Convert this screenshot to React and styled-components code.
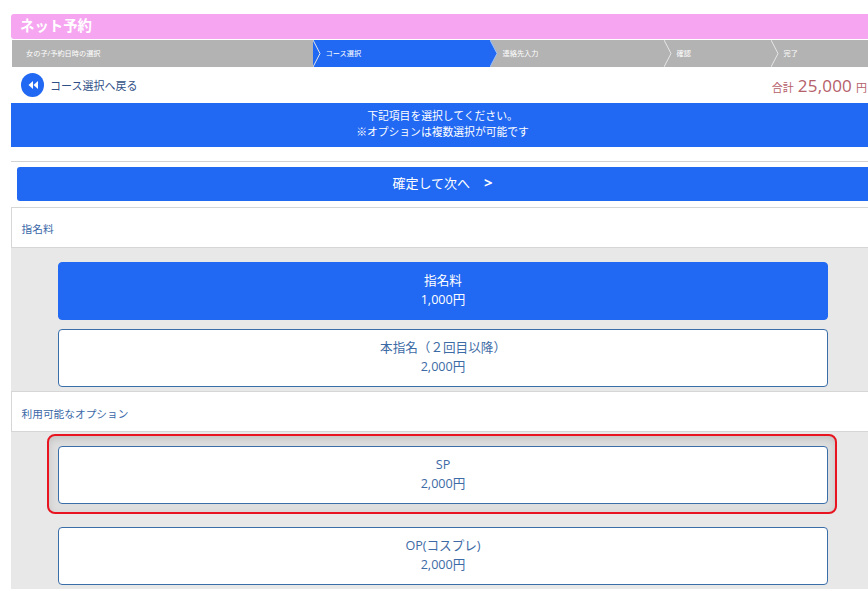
import React from "react";
import styled, { createGlobalStyle } from "styled-components";

const GlobalStyle = createGlobalStyle`
  html, body {
    margin: 0;
    padding: 0;
    background: #fff;
    overflow: hidden;
  }
  body {
    font-family: "Open Sans", "Noto Sans CJK JP", sans-serif;
  }
`;

const Page = styled.div`
  width: 868px;
  height: 591px;
  padding: 14px 0 0 11px;
  box-sizing: border-box;
  overflow: hidden;
`;

const Title = styled.h1`
  margin: 0;
  height: 25px;
  padding-left: 9px;
  background: #f6a6f1;
  border-radius: 3px 0 0 3px;
  color: #fff;
  font-size: 14.4px;
  font-weight: 700;
  line-height: 23px;
`;

const Steps = styled.div`
  display: grid;
  grid-template-columns: 301px 177px 174px 107px 1fr;
  height: 27px;
  margin: 1px 0 0 1px;
  background: #b3b3b3;
`;

const Step = styled.div`
  position: relative;
  padding-left: ${(p) => (p.$first ? "14px" : "12.5px")};
  background: ${(p) => (p.$active ? "#2168f2" : "transparent")};
  color: #fff;
  font-size: 7.2px;
  line-height: 27px;
  white-space: nowrap;
`;

const Chevron = styled.svg`
  position: absolute;
  top: 0;
  right: -8px;
  width: 8px;
  height: 27px;
  z-index: 1;
`;

const BackRow = styled.div`
  display: flex;
  align-items: center;
  justify-content: space-between;
  height: 36px;
  padding: 0 1px 0 10px;
`;

const BackLink = styled.a`
  display: flex;
  align-items: center;
  gap: 6px;
  color: #2f4f86;
  font-size: 11px;
`;

const BackIcon = styled.span`
  display: flex;
  align-items: center;
  justify-content: center;
  width: 23px;
  height: 24px;
  border-radius: 50%;
  background: #2168f2;
`;

const Total = styled.div`
  display: flex;
  align-items: baseline;
  gap: 4px;
  color: #b5606a;
  font-size: 11px;
`;

const Amount = styled.span`
  font-size: 17px;
  letter-spacing: 0.2px;
`;

const Notice = styled.div`
  height: 44px;
  padding: 5px 0 0 6px;
  box-sizing: border-box;
  background: #2168f2;
  color: #fff;
  font-size: 10.8px;
  line-height: 16px;
  text-align: center;
`;

const Divider = styled.hr`
  height: 1px;
  margin: 14px 0 5px;
  border: 0;
  background: #d2d2d2;
`;

const NextButton = styled.button`
  display: block;
  width: 851px;
  height: 34px;
  margin: 0 0 6px 6px;
  padding: 0 0 5px;
  border: 0;
  border-radius: 3px 0 0 3px;
  background: #2168f2;
  color: #fff;
  font-family: inherit;
  font-size: 13px;
`;

const Arrow = styled.span`
  margin-left: 14px;
  font-size: 15px;
  font-weight: 700;
`;

const SectionHead = styled.div`
  display: flex;
  align-items: center;
  height: 41px;
  padding: ${(p) => p.$nudge}px 0 0 9.5px;
  box-sizing: border-box;
  background: #fff;
  border: 1px solid #d6d6d6;
  border-right: 0;
  color: #3a68a8;
  font-size: 10.7px;
`;

const Options = styled.div`
  position: relative;
  display: flex;
  flex-direction: column;
  gap: ${(p) => p.$gap}px;
  padding: 14px 40px 4px 47px;
  background: #e8e8e8;
`;

const Option = styled.button`
  position: relative;
  display: block;
  height: 58px;
  padding: 0 0 2px;
  box-sizing: border-box;
  border: 1px solid ${(p) => (p.$selected ? "#2168f2" : "#3a6ea8")};
  border-radius: 4px;
  background: ${(p) => (p.$selected ? "#2168f2" : "#fff")};
  color: ${(p) => (p.$selected ? "#fff" : "#3d6ba5")};
  font-family: inherit;
  font-size: 12.6px;
  line-height: 19px;
`;

const Highlight = styled.div`
  position: absolute;
  top: 2px;
  left: 36px;
  width: 790px;
  height: 80px;
  box-sizing: border-box;
  border: 2px solid #e8141f;
  border-radius: 8px;
  background: #dedede;
  box-shadow: inset 0 3px 7px rgba(90, 90, 90, 0.2);
`;

const steps = [
  { label: "女の子/予約日時の選択" },
  { label: "コース選択", active: true },
  { label: "連絡先入力" },
  { label: "確認" },
  { label: "完了", last: true },
];

function StepChevron({ active }) {
  return (
    <Chevron viewBox="0 0 8 27">
      {active && <path d="M0 0 L7 13.5 L0 27 Z" fill="#2168f2" />}
      <path
        d="M0 0 L7 13.5 L0 27"
        fill="none"
        stroke={active ? "#9cc0f5" : "#e6e6e6"}
        strokeWidth="1"
      />
    </Chevron>
  );
}

export default function App() {
  return (
    <>
      <GlobalStyle />
      <Page>
        <Title>ネット予約</Title>
        <Steps>
          {steps.map((s, i) => (
            <Step key={s.label} $active={s.active} $first={i === 0}>
              {s.label}
              {!s.last && <StepChevron active={s.active} />}
            </Step>
          ))}
        </Steps>
        <BackRow>
          <BackLink>
            <BackIcon>
              <svg width="10" height="8" viewBox="0 0 10 8">
                <path d="M5 0 L5 8 L0.5 4 Z M10 0 L10 8 L5.5 4 Z" fill="#fff" />
              </svg>
            </BackIcon>
            コース選択へ戻る
          </BackLink>
          <Total>
            合計 <Amount>25,000</Amount> 円
          </Total>
        </BackRow>
        <Notice>
          下記項目を選択してください。
          <br />
          ※オプションは複数選択が可能です
        </Notice>
        <Divider />
        <NextButton>
          確定して次へ<Arrow>&gt;</Arrow>
        </NextButton>
        <SectionHead $nudge={2}>指名料</SectionHead>
        <Options $gap={9}>
          <Option $selected>
            指名料
            <br />
            1,000円
          </Option>
          <Option>
            本指名（２回目以降）
            <br />
            2,000円
          </Option>
        </Options>
        <SectionHead $nudge={4}>利用可能なオプション</SectionHead>
        <Options $gap={23}>
          <Highlight />
          <Option>
            SP
            <br />
            2,000円
          </Option>
          <Option>
            OP(コスプレ)
            <br />
            2,000円
          </Option>
        </Options>
      </Page>
    </>
  );
}
